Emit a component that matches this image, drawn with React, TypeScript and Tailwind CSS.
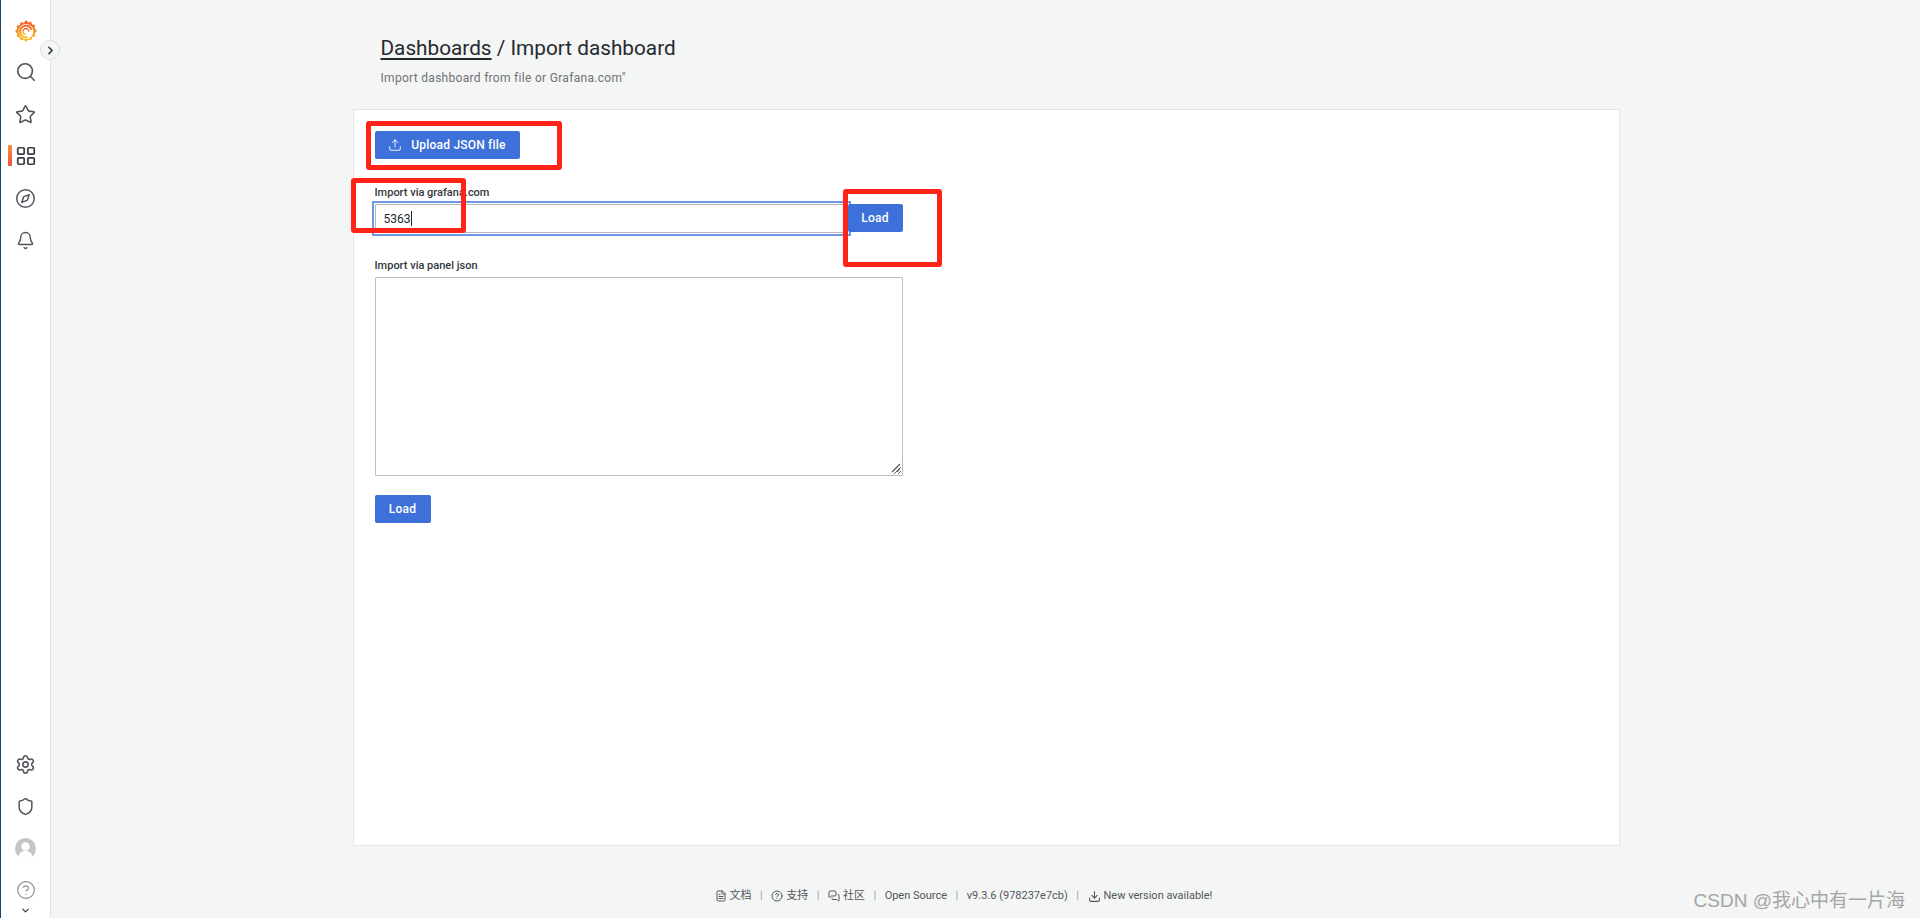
import { Bell, ChevronDown, ChevronRight, CircleHelp, Compass, FileText, LayoutGrid, MessagesSquare, Search, Settings, Shield, Star, Upload, Download } from 'lucide-react';

function GrafanaLogo() {
  return (
    <svg width="24" height="24" viewBox="0 0 24 24">
      <defs>
        <linearGradient id="gf" x1="0" y1="1" x2="0" y2="0">
          <stop offset="0" stopColor="#fcc21b" />
          <stop offset="1" stopColor="#f05a28" />
        </linearGradient>
      </defs>
      <path
        fill="url(#gf)"
        d="M12 1l2.200 2.400 3-1 .8 3 3.200.6-.7 3.100L23 12l-2.300 2.300.5 3-3 .8-.8 3-3-.6L12 23l-2.400-2.400-3 .9-.8-3-3-.8.6-3L1 12l2.300-2.100-.6-3.200 3.200-.7.8-3.100 3 1z"
      />
      <circle cx="12" cy="12.500" r="7.400" fill="#fff" />
      <path d="M17.500 11a5.800 5.800 0 1 0-4 7" fill="none" stroke="url(#gf)" strokeWidth="1.900" />
      <path d="M14.800 13a3 3 0 1 0-3 2.500" fill="none" stroke="url(#gf)" strokeWidth="1.300" />
    </svg>
  );
}

function NavItem({ children, active }: { children: React.ReactNode; active?: boolean }) {
  return (
    <div className="relative flex h-[42px] w-full items-center justify-center text-[#52545c]">
      {active && <span className="absolute left-[7px] top-[10px] h-[21px] w-[4px] rounded-[1px] bg-gradient-to-b from-[#f78b3c] to-[#f0513c]" />}
      {children}
    </div>
  );
}

function Sep() {
  return <span className="text-[#9a9ca2]">|</span>;
}

function BlueButton({ children, className }: { children: React.ReactNode; className: string }) {
  return (
    <button className={`flex h-[28px] items-center justify-center rounded-[2px] bg-[#3d71d9] text-[12px] font-medium tracking-[0.2px] text-white ${className}`}>
      {children}
    </button>
  );
}

function RedBox({ className }: { className: string }) {
  return <div className={`absolute rounded-[3px] border-[5px] border-[#ff2318] ${className}`} />;
}

export default function App() {
  return (
    <div className="relative flex h-[918px] overflow-hidden bg-[#f4f5f5] font-['Roboto','Noto_Sans_CJK_SC',sans-serif] text-[#24292e]">
      <aside className="relative flex h-full w-[51px] shrink-0 flex-col border-r border-[#e2e3e4] border-l border-l-[#17456b] bg-white">
        <div className="flex h-[51px] items-center justify-center pt-[10px]">
          <GrafanaLogo />
        </div>
        <div className="flex flex-col">
          <NavItem><Search size={22} strokeWidth={1.8} /></NavItem>
          <NavItem><Star size={21} strokeWidth={1.8} /></NavItem>
          <NavItem active><LayoutGrid size={22} strokeWidth={1.9} className="text-[#3a3c42]" /></NavItem>
          <NavItem><Compass size={21} strokeWidth={1.7} /></NavItem>
          <NavItem><Bell size={19} strokeWidth={1.8} /></NavItem>
        </div>
        <div className="mt-auto flex flex-col items-center pb-[2px]">
          <NavItem><Settings size={21} strokeWidth={1.8} /></NavItem>
          <NavItem><Shield size={19} strokeWidth={1.9} /></NavItem>
          <NavItem>
            <svg width="21" height="21" viewBox="0 0 21 21">
              <circle cx="10.500" cy="10.500" r="10.500" fill="#c4c5c7" />
              <circle cx="10.500" cy="8.500" r="4.200" fill="#fff" />
              <path d="M3.500 18.500c1-4 3.800-5.500 7-5.500s6 1.500 7 5.500a10.500 10.500 0 0 1-14 0z" fill="#fff" />
            </svg>
          </NavItem>
          <NavItem><CircleHelp size={20} strokeWidth={1.4} className="text-[#8b8c90]" /></NavItem>
          <ChevronDown size={11} strokeWidth={2.5} className="-mt-[6px] text-[#33353a]" />
        </div>
        <div className="absolute left-[39px] top-[40px] flex h-[20px] w-[20px] items-center justify-center rounded-full border border-[#dcdedf] bg-[#f4f5f5]">
          <ChevronRight size={13} strokeWidth={2.6} className="text-[#24292e]" />
        </div>
      </aside>

      <main className="flex min-w-0 flex-1 flex-col items-center">
        <div className="ml-[1px] flex h-full w-[1267px] flex-col">
          <header className="h-[109px] pl-[28px] pt-[33px]">
            <h1 className="text-[20.75px] leading-[30px]">
              <span className="underline decoration-[1.5px] underline-offset-[3px]">Dashboards</span> / Import dashboard
            </h1>
            <p className="mt-[7px] text-[12px] leading-[16px] tracking-[0.3px] text-[#6f7277]">Import dashboard from file or Grafana.com"</p>
          </header>

          <section className="h-[737px] border border-[#e4e5e6] bg-white pl-[21px] pt-[21px]">
            <BlueButton className="w-[145px] gap-[9px]">
              <Upload size={14} strokeWidth={1.6} />
              Upload JSON file
            </BlueButton>

            <label className="mt-[26px] block text-[11px] font-medium leading-[16px] text-[#33373b]">Import via grafana.com</label>
            <div className="mt-[3px] flex w-[528px]">
              <div className="flex h-[29px] w-[473px] items-center border border-[#b8b9bb] pl-[8px] text-[12px] outline-2 outline-offset-[1px] outline-[#6f97e6]">
                5363<span className="ml-[1px] h-[15px] w-[1px] bg-[#24292e]" />
              </div>
              <BlueButton className="w-[55px]">Load</BlueButton>
            </div>

            <label className="mt-[25px] block text-[11px] font-medium leading-[16px] text-[#33373b]">Import via panel json</label>
            <div className="relative mt-[3px] w-[528px]">
              <textarea className="block h-[199px] w-full rounded-[1px] border border-[#bcbdbe] bg-white" />
              <svg className="pointer-events-none absolute bottom-[3px] right-[2px]" width="10" height="10" viewBox="0 0 10 10">
                <path d="M1 9l8-8M5.500 9l3.500-3.500" stroke="#55575c" strokeWidth="1.300" fill="none" />
              </svg>
            </div>

            <BlueButton className="mt-[19px] w-[56px]">Load</BlueButton>
          </section>

          <footer className="mt-[42px] flex items-center justify-center gap-[8.500px] pr-[45px] text-[11px] text-[#52565c]">
            <span className="flex items-center gap-[3px]"><FileText size={12} />文档</span>
            <Sep />
            <span className="flex items-center gap-[3px]"><CircleHelp size={12} />支持</span>
            <Sep />
            <span className="flex items-center gap-[3px]"><MessagesSquare size={12} />社区</span>
            <Sep />
            <span>Open Source</span>
            <Sep />
            <span>v9.3.6 (978237e7cb)</span>
            <Sep />
            <span className="flex items-center gap-[3px]"><Download size={13} />New version available!</span>
          </footer>
        </div>
      </main>

      <RedBox className="left-[366px] top-[121px] h-[49px] w-[196px]" />
      <RedBox className="left-[351px] top-[178px] h-[55px] w-[115px]" />
      <RedBox className="left-[843px] top-[189px] h-[78px] w-[99px]" />

      <div className="absolute bottom-[5px] right-[15px] font-['Liberation_Sans','Noto_Sans_CJK_SC',sans-serif] text-[19px] leading-[24px] text-[#a3a5a6]">CSDN @我心中有一片海</div>
    </div>
  );
}
